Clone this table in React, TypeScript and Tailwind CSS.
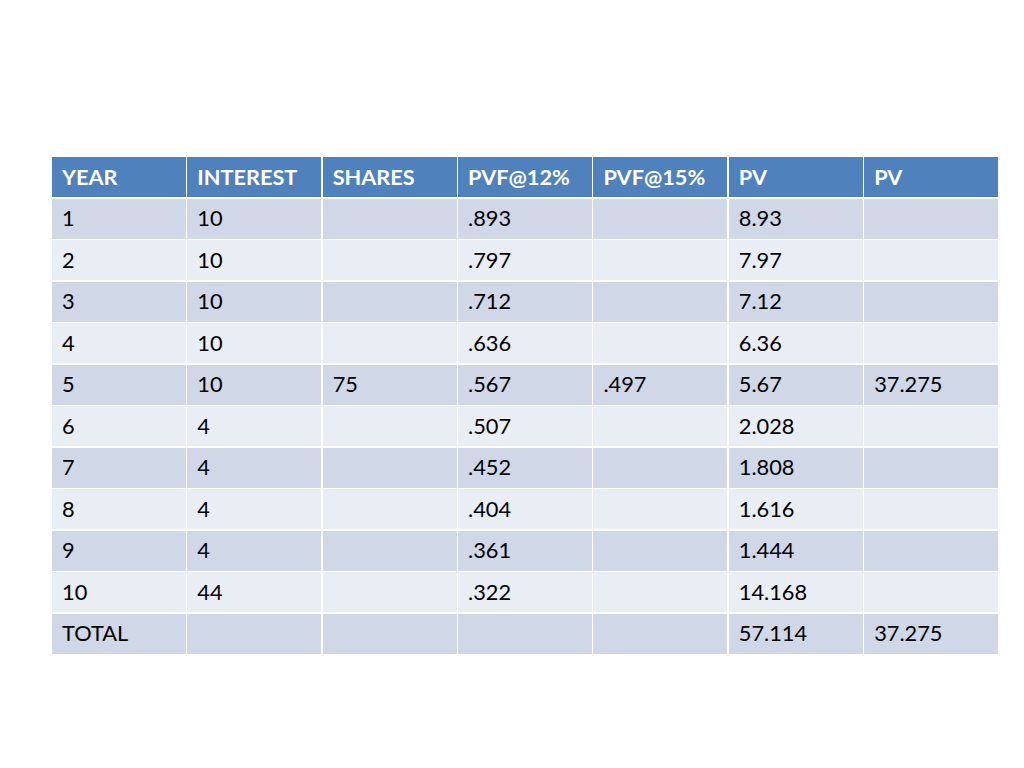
const HEAD = ["YEAR", "INTEREST", "SHARES", "PVF@12%", "PVF@15%", "PV", "PV"];

const ROWS: string[][] = [
  ["1", "10", "", ".893", "", "8.93", ""],
  ["2", "10", "", ".797", "", "7.97", ""],
  ["3", "10", "", ".712", "", "7.12", ""],
  ["4", "10", "", ".636", "", "6.36", ""],
  ["5", "10", "75", ".567", ".497", "5.67", "37.275"],
  ["6", "4", "", ".507", "", "2.028", ""],
  ["7", "4", "", ".452", "", "1.808", ""],
  ["8", "4", "", ".404", "", "1.616", ""],
  ["9", "4", "", ".361", "", "1.444", ""],
  ["10", "44", "", ".322", "", "14.168", ""],
  ["TOTAL", "", "", "", "", "57.114", "37.275"],
];

export default function App() {
  return (
    <div
      className="w-[1024px] h-[768px] bg-white pt-[157px] px-[52px]"
      style={{ fontFamily: 'Lato, "Open Sans", sans-serif' }}
    >
      <div className="grid grid-cols-7 gap-[1.5px] w-[946px] bg-white">
        {HEAD.map((h, i) => (
          <div
            key={`h${i}`}
            className="h-[40px] bg-[#4f81bd] text-white font-bold text-[21.7px] flex items-center pl-[10px]"
          >
            {h}
          </div>
        ))}
        {ROWS.map((row, r) =>
          row.map((cell, c) => (
            <div
              key={`${r}-${c}`}
              className={`h-[40px] ${r % 2 === 0 ? "bg-[#d0d8e8]" : "bg-[#e9edf4]"} text-black text-[21.8px] flex items-center pl-[10px]`}
            >
              {cell}
            </div>
          ))
        )}
      </div>
    </div>
  );
}
